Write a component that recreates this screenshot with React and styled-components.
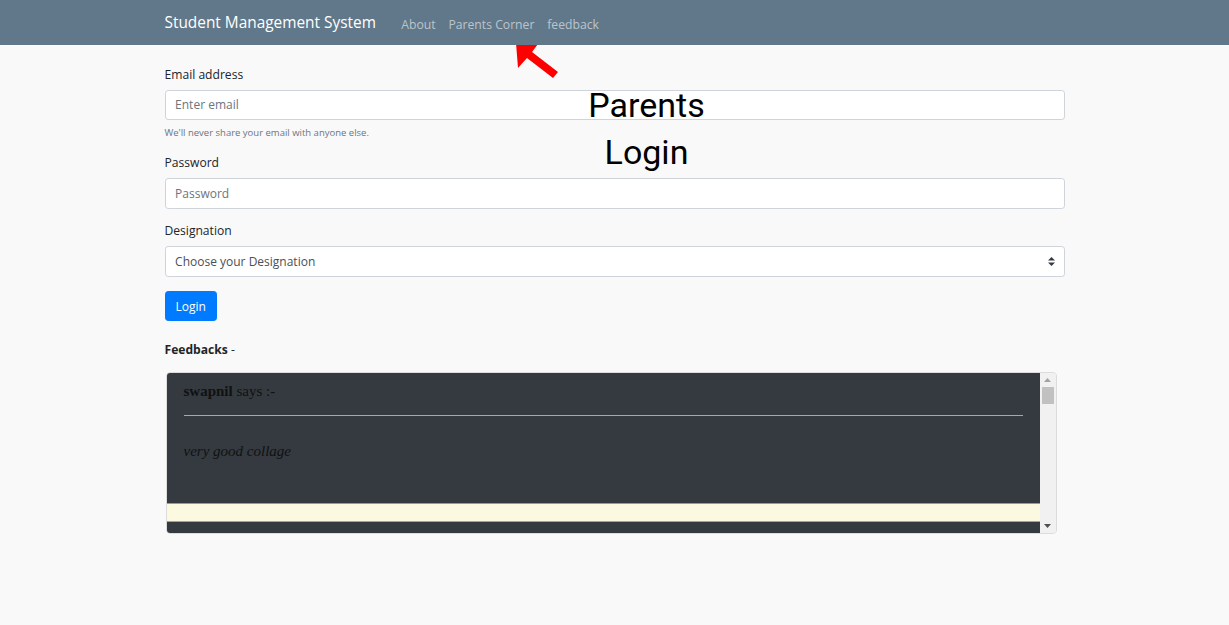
import React from "react";
import styled, { createGlobalStyle, css } from "styled-components";

const GlobalStyle = createGlobalStyle`
  body {
    margin: 0;
    background: #f9f9f9;
    font-family: "Open Sans", "Noto Sans", sans-serif;
    color: #212529;
  }
`;

const Navbar = styled.nav`
  background: #60788a;
  height: 45px;
`;

const NavInner = styled.div`
  width: 900px;
  height: 100%;
  margin: 0 auto;
  display: flex;
  align-items: center;
`;

const Brand = styled.a`
  color: #fff;
  font-size: 15.4px;
  margin-right: 19px;
  text-decoration: none;
`;

const NavLinks = styled.ul`
  display: flex;
  list-style: none;
  margin: 0;
  padding: 0;
`;

const NavLink = styled.a`
  padding: 0 6.4px;
  color: rgba(255, 255, 255, 0.58);
  font-size: 12.2px;
  text-decoration: none;
`;

const Main = styled.main`
  position: relative;
  width: 900px;
  margin: 0 auto;
  padding-top: 20px;
`;

const Heading = styled.h1`
  position: absolute;
  top: 37px;
  left: 402px;
  width: 160px;
  margin: 0;
  font-family: Roboto, sans-serif;
  font-weight: 400;
  font-size: 34px;
  line-height: 47px;
  text-align: center;
  color: #000;
  z-index: 2;
`;

const Arrow = styled.svg`
  position: absolute;
  top: 0;
  left: 340px;
  z-index: 2;
`;

const FormGroup = styled.div`
  margin-bottom: 12.8px;
`;

const Label = styled.label`
  display: block;
  margin-bottom: 5.6px;
  line-height: 19.2px;
  font-size: 12.1px;
  color: #212529;
`;

const control = css`
  display: block;
  box-sizing: border-box;
  width: 100%;
  height: 30.4px;
  padding: 0 9.6px;
  border: 1px solid #ced4da;
  border-radius: 3.2px;
  background: #fff;
  font-family: inherit;
  font-size: 12px;
  color: #495057;
  outline: none;
`;

const Input = styled.input`
  ${control}
  &::placeholder {
    color: #6c757d;
  }
`;

const Help = styled.small`
  display: block;
  margin-top: 5px;
  font-size: 9.5px;
  line-height: 15.36px;
  color: #6c757d;
`;

const SelectWrap = styled.div`
  position: relative;
`;

const Select = styled.select`
  ${control}
  appearance: none;
`;

const SelectArrow = styled.svg`
  position: absolute;
  right: 10px;
  top: 11px;
  pointer-events: none;
`;

const Button = styled.button`
  margin-top: 1.6px;
  height: 30.4px;
  padding: 0 10px;
  border: 1px solid #007bff;
  border-radius: 3.2px;
  background: #007bff;
  color: #fff;
  font-family: inherit;
  font-size: 12px;
`;

const FeedTitle = styled.div`
  margin: 19px 0 12px;
  line-height: 19.2px;
  font-size: 12.1px;
  b {
    font-weight: 700;
  }
`;

const FeedBox = styled.div`
  box-sizing: border-box;
  width: 891px;
  height: 162px;
  margin-left: 1px;
  border: 1px solid #dcdcdc;
  border-radius: 4px;
  overflow: hidden;
  display: flex;
`;

const FeedList = styled.div`
  flex: 1;
  background: #fbf9df;
  overflow: hidden;
`;

const Card = styled.div`
  box-sizing: border-box;
  height: ${(p) => p.$h}px;
  background: #343a40;
  padding: 9px 17px 0 17px;
  border-top: ${(p) => (p.$next ? "1px solid #a9a48c" : "none")};
  border-bottom: 1px solid #9a9a9a;
  margin-bottom: 17px;
  font-family: "Liberation Serif", serif;
  font-size: 15px;
  line-height: 18px;
  color: #111;
`;

const CardHead = styled.p`
  margin: 0;
  b {
    font-weight: 700;
  }
`;

const Rule = styled.hr`
  margin: 15px 0 0;
  border: 0;
  height: 1px;
  background: #a8a8a8;
`;

const Message = styled.p`
  margin: 26px 0 0;
  font-style: italic;
`;

const Scrollbar = styled.div`
  width: 16px;
  background: #f1f1f1;
  display: flex;
  flex-direction: column;
  align-items: center;
`;

const ScrollBtn = styled.div`
  height: 14px;
  display: flex;
  align-items: center;
  justify-content: center;
`;

const Thumb = styled.div`
  width: 12px;
  height: 17px;
  background: #c1c1c1;
`;

const Track = styled.div`
  flex: 1;
`;

const feedbacks = [{ name: "swapnil", message: "very good collage" }];

export default function App() {
  return (
    <>
      <GlobalStyle />
      <Navbar>
        <NavInner>
          <Brand href="#">Student Management System</Brand>
          <NavLinks>
            <li>
              <NavLink href="#">About</NavLink>
            </li>
            <li>
              <NavLink href="#">Parents Corner</NavLink>
            </li>
            <li>
              <NavLink href="#">feedback</NavLink>
            </li>
          </NavLinks>
        </NavInner>
      </Navbar>
      <Main>
        <Arrow width="60" height="40" viewBox="0 0 60 40">
          <polygon
            points="11,-2 33,-1 27,7 53,27 48,33 22,13 13,23"
            fill="#ff0000"
          />
        </Arrow>
        <Heading>Parents Login</Heading>
        <form onSubmit={(e) => e.preventDefault()}>
          <FormGroup>
            <Label htmlFor="email">Email address</Label>
            <Input id="email" type="email" placeholder="Enter email" />
            <Help>We'll never share your email with anyone else.</Help>
          </FormGroup>
          <FormGroup>
            <Label htmlFor="password">Password</Label>
            <Input id="password" type="password" placeholder="Password" />
          </FormGroup>
          <FormGroup>
            <Label htmlFor="designation">Designation</Label>
            <SelectWrap>
              <Select id="designation" defaultValue="">
                <option value="">Choose your Designation</option>
                <option value="parent">Parent</option>
              </Select>
              <SelectArrow width="7" height="9" viewBox="0 0 7 9">
                <polygon points="3.5,0 7,3.5 0,3.5" fill="#343a40" />
                <polygon points="0,5.5 7,5.5 3.5,9" fill="#343a40" />
              </SelectArrow>
            </SelectWrap>
          </FormGroup>
          <Button type="submit">Login</Button>
        </form>
        <FeedTitle>
          <b>Feedbacks</b> -
        </FeedTitle>
        <FeedBox>
          <FeedList>
            {feedbacks.map((f) => (
              <Card key={f.name} $h={131}>
                <CardHead>
                  <b>{f.name}</b> says :-
                </CardHead>
                <Rule />
                <Message>{f.message}</Message>
              </Card>
            ))}
            <Card $h={40} $next />
          </FeedList>
          <Scrollbar>
            <ScrollBtn>
              <svg width="7" height="4" viewBox="0 0 7 4">
                <polygon points="3.5,0 7,4 0,4" fill="#a3a3a3" />
              </svg>
            </ScrollBtn>
            <Thumb />
            <Track />
            <ScrollBtn>
              <svg width="7" height="4" viewBox="0 0 7 4">
                <polygon points="0,0 7,0 3.5,4" fill="#505050" />
              </svg>
            </ScrollBtn>
          </Scrollbar>
        </FeedBox>
      </Main>
    </>
  );
}
